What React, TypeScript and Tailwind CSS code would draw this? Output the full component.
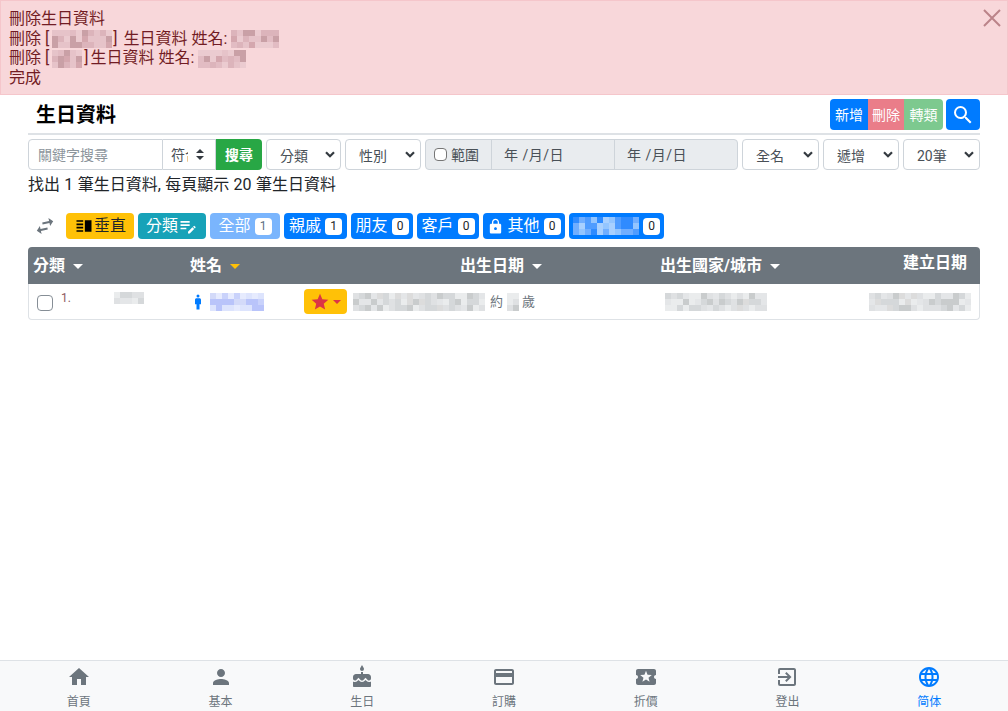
import type { ReactNode } from "react";
import {
  MdCake,
  MdCreditCard,
  MdEditNote,
  MdExitToApp,
  MdHome,
  MdLanguage,
  MdLocalActivity,
  MdLock,
  MdMan,
  MdPerson,
  MdSearch,
  MdStar,
  MdSwapHoriz,
  MdVerticalSplit,
} from "react-icons/md";

const FONT = "font-['Roboto','Noto_Sans_CJK_TC','Noto_Sans',sans-serif]";

// stand-in for the pixelated (privacy blurred) text
function Mosaic({ cols, rows = 3, size = 6, colors, seed = 1 }: { cols: number; rows?: number; size?: number; colors: string[]; seed?: number }) {
  const cells = [];
  for (let i = 0; i < cols * rows; i++) {
    const v = Math.abs(Math.sin((i + 1) * 12.9898 * seed) * 43758.5453);
    cells.push(colors[Math.floor(v) % colors.length]);
  }
  return (
    <span
      className="inline-grid align-middle"
      style={{ gridTemplateColumns: `repeat(${cols}, ${size}px)`, gridAutoRows: `${size}px` }}
    >
      {cells.map((c, i) => (
        <span key={i} style={{ background: c }} />
      ))}
    </span>
  );
}

const PINK = ["#e6c3c9", "#dcb4bb", "#ebcbd0", "#d4a7ae", "#c9a0a6", "#e2bcc3"];
const GRAY = ["#e4e6e8", "#d5d8da", "#eaeced", "#c9cccd", "#dfe1e3", "#dcdcdc"];
const LILAC = ["#c9d2fb", "#dde4fd", "#b9c4fa", "#e6ebfe", "#d3daf9"];
const SKY = ["#93c5ff", "#70aeff", "#a8d0ff", "#4f9cff", "#2f8bff"];

function Select({ label, className }: { label: string; className: string }) {
  return (
    <div className={`flex h-[31px] items-center justify-between rounded border border-[#ced4da] bg-white pl-[13px] pr-[5px] pt-[2px] text-sm text-[#495057] ${className}`}>
      <span>{label}</span>
      <svg viewBox="0 0 10 7" className="mb-[2px] h-[7px] w-[10px] fill-none stroke-[#343a40] stroke-[2.2]">
        <path d="M1 1.2 5 5.2 9 1.2" />
      </svg>
    </div>
  );
}

function Tab({ label, count, dim, icon, className = "px-[5px]" }: { label: ReactNode; count: number; dim?: boolean; icon?: ReactNode; className?: string }) {
  return (
    <div className={`flex h-[26px] items-center rounded text-white ${dim ? "bg-[#7ab5fd]" : "bg-[#007bff]"} ${className}`}>
      {icon}
      {label}
      <span className={`ml-[4px] flex h-[17px] w-[17px] items-center justify-center rounded bg-white text-xs ${dim ? "text-[#5d6f82]" : "text-[#212529]"}`}>
        {count}
      </span>
    </div>
  );
}

function Caret({ yellow }: { yellow?: boolean }) {
  return (
    <span className={`ml-[8px] inline-block border-x-[5px] border-t-[5px] border-x-transparent align-middle ${yellow ? "border-t-[#ffc107]" : "border-t-white"}`} />
  );
}

const navItems = [
  { label: "首頁", icon: <MdHome /> },
  { label: "基本", icon: <MdPerson /> },
  { label: "生日", icon: <MdCake /> },
  { label: "訂購", icon: <MdCreditCard /> },
  { label: "折價", icon: <MdLocalActivity /> },
  { label: "登出", icon: <MdExitToApp /> },
  { label: "简体", icon: <MdLanguage />, active: true },
];

export default function App() {
  return (
    <div className={`flex min-h-screen flex-col bg-white text-base text-[#212529] ${FONT}`}>
      <div className="flex justify-between border border-[#f5c6cb] bg-[#f8d7da] pb-[7px] pl-[8px] pr-[6px] pt-[8px] leading-[19.25px] text-[#721c24]">
        <div>
          <div>刪除生日資料</div>
          <div className="flex items-center">
            刪除 [<span className="ml-[3px]"><Mosaic cols={10} seed={2} colors={PINK} /></span>
            <span className="ml-[1px]">]</span>
            <span className="ml-[6px]">生日資料</span>
            <span className="ml-[4px]">姓名:</span>
            <span className="ml-[4px]"><Mosaic cols={8} seed={3} colors={PINK} /></span>
          </div>
          <div className="flex items-center">
            刪除 [<span className="ml-[3px]"><Mosaic cols={5} seed={4} colors={PINK} /></span>
            <span className="ml-[2px]">]</span>
            <span className="ml-[2px]">生日資料</span>
            <span className="ml-[4px]">姓名:</span>
            <span className="ml-[4px]"><Mosaic cols={8} seed={5} colors={PINK} /></span>
          </div>
          <div>完成</div>
        </div>
        <svg viewBox="0 0 18 18" className="h-[18px] w-[18px] stroke-[#bb8389] stroke-2">
          <path d="M1 1 17 17M17 1 1 17" />
        </svg>
      </div>

      <div className="flex-1 px-[28px]">
        <div className="flex h-[40px] items-end justify-between border-b-2 border-[#dee2e6] pb-[3px]">
          <h1 className="pb-[1px] pl-[8px] text-xl font-bold text-black">生日資料</h1>
          <div className="flex gap-[3px]">
            <div className="flex h-[31px] items-center overflow-hidden rounded text-sm text-white">
              <span className="flex h-full w-[38px] items-center justify-center bg-[#007bff]">新增</span>
              <span className="flex h-full w-[36px] items-center justify-center bg-[#ea7d89]">刪除</span>
              <span className="flex h-full w-[39px] items-center justify-center bg-[#7dc98f]">轉類</span>
            </div>
            <div className="flex h-[31px] w-[34px] items-center justify-center rounded bg-[#007bff] text-[24px] text-white">
              <MdSearch />
            </div>
          </div>
        </div>

        <div className="mt-[4px] flex gap-[4px] text-sm">
          <div className="flex h-[31px]">
            <div className="flex w-[135px] items-center rounded-l border border-[#ced4da] pl-[9px] text-[#8d959c]">關鍵字搜尋</div>
            <div className="flex w-[53px] items-center border-y border-r border-[#ced4da] pl-[8px] text-[#495057]">
              <span className="w-[17px] overflow-hidden whitespace-nowrap">符合</span>
              <svg viewBox="0 0 8 11" className="ml-[8px] h-[11px] w-[8px] fill-[#343a40]">
                <path d="M4 0 8 4H0ZM0 7H8L4 11Z" />
              </svg>
            </div>
            <div className="flex w-[46px] items-center justify-center rounded-r bg-[#28a745] font-bold text-white">搜尋</div>
          </div>
          <Select label="分類" className="w-[75px]" />
          <Select label="性別" className="w-[76px]" />
          <div className="flex h-[31px] w-[313px] rounded border border-[#ced4da] bg-[#e9ecef] text-[#495057]">
            <label className="flex w-[66px] items-center border-r border-[#ced4da] pl-[8px]">
              <span className="mr-[4px] h-[13px] w-[13px] rounded-sm border border-[#767676] bg-white" />
              範圍
            </label>
            <div className="flex w-[123px] items-center border-r border-[#ced4da] pl-[12px] tracking-[0.5px]">年 /月/日</div>
            <div className="flex flex-1 items-center pl-[12px] tracking-[0.5px]">年 /月/日</div>
          </div>
          <Select label="全名" className="w-[77px]" />
          <Select label="遞增" className="w-[76px]" />
          <Select label="20筆" className="w-[77px]" />
        </div>

        <p className="mt-[5px] leading-[20px] [word-spacing:0.4px]">找出 1 筆生日資料, 每頁顯示 20 筆生日資料</p>

        <div className="mt-[18px] flex items-center gap-[4px]">
          <div className="ml-[5px] mr-[5px] flex w-[24px] justify-center">
            <MdSwapHoriz className="-rotate-12 text-[24px] text-[#6c757d]" />
          </div>
          <div className="flex h-[26px] w-[68px] items-center justify-center rounded bg-[#ffc107] text-[#212529]">
            <MdVerticalSplit className="text-[20px] text-black" />
            垂直
          </div>
          <div className="flex h-[26px] w-[68px] items-center justify-center rounded bg-[#17a2b8] text-white">
            分類
            <MdEditNote className="text-[20px]" />
          </div>
          <Tab label="全部" count={1} dim className="w-[70px] justify-center" />
          <Tab label="親戚" count={1} className="w-[63px] justify-center" />
          <Tab label="朋友" count={0} className="w-[62px] justify-center" />
          <Tab label="客戶" count={0} className="w-[62px] justify-center" />
          <Tab label="其他" count={0} icon={<MdLock className="mr-[3px] text-[17px]" />} className="w-[82px] justify-center" />
          <Tab label={<Mosaic cols={11} seed={6} colors={SKY} />} count={0} className="w-[95px] justify-center" />
        </div>

        <div className="mt-[8px] grid grid-cols-[157px_275px_200px_1fr] overflow-hidden rounded-t bg-[#6c757d] pt-[1px] font-bold leading-[36px] text-white">
          <div className="pl-[5px]">分類<Caret /></div>
          <div className="pl-[5px]">姓名<Caret yellow /></div>
          <div>出生日期<Caret /></div>
          <div>出生國家/城市<Caret /></div>
        </div>
        <div className="-mt-[37px] flex h-[37px] items-start justify-end pr-[13px] pt-[6px] font-bold leading-[20px] text-white">
          <span className="relative">建立日期</span>
        </div>

        <div className="flex h-[36px] items-center rounded-b border border-t-0 border-[#dee2e6] text-[13px] text-[#6c757d]">
          <span className="ml-[8px] mt-[2px] h-[16px] w-[16px] rounded border border-[#868e96] bg-white" />
          <span className="mb-[8px] ml-[8px] w-[53px] text-xs text-[#8d5a5f]">1.</span>
          <span className="mb-[8px]"><Mosaic cols={5} rows={2} seed={7} colors={GRAY} /></span>
          <MdMan className="ml-[45px] text-[18px] text-[#007bff]" />
          <span className="ml-[3px]"><Mosaic cols={9} seed={8} colors={LILAC} /></span>
          <div className="ml-[40px] flex h-[25px] w-[43px] items-center justify-center rounded bg-[#ffc107]">
            <MdStar className="text-[20px] text-[#dc3545]" />
            <span className="ml-[3px] border-x-[4px] border-t-[4px] border-x-transparent border-t-[#dc3545]" />
          </div>
          <span className="ml-[6px]"><Mosaic cols={22} seed={9} colors={GRAY} /></span>
          <span className="ml-[5px]">約</span>
          <span className="ml-[4px]"><Mosaic cols={2} seed={10} colors={GRAY} /></span>
          <span className="ml-[3px]">歲</span>
          <span className="ml-[130px]"><Mosaic cols={17} seed={11} colors={GRAY} /></span>
          <span className="ml-[102px]"><Mosaic cols={17} seed={12} colors={GRAY} /></span>
        </div>
      </div>

      <nav className="grid h-[51px] grid-cols-7 border-t border-[#dee2e6] bg-[#f8f9fa] px-[8px]">
        {navItems.map((item) => (
          <div key={item.label} className={`flex flex-col items-center pt-[4px] text-xs ${item.active ? "text-[#007bff]" : "text-[#6c757d]"}`}>
            <span className="text-[24px]">{item.icon}</span>
            <span className="mt-[5px]">{item.label}</span>
          </div>
        ))}
      </nav>
    </div>
  );
}
